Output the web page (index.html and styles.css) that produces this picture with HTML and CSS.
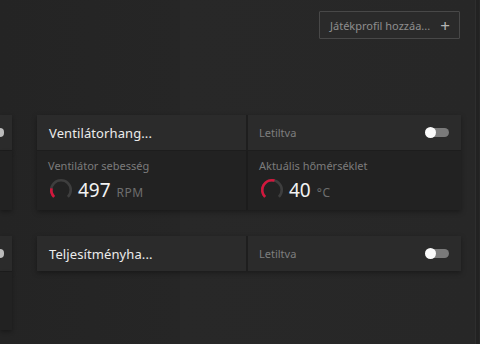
FILE: index.html
```html
<!DOCTYPE html>
<html lang="hu">
<head>
    <meta charset="UTF-8">
    <meta name="viewport" content="width=device-width, initial-scale=1.0">
    <title>Játékprofilok</title>
    <link rel="stylesheet" href="styles.css">
</head>
<body>
    <div class="page">
        <div class="toolbar">
            <button class="add-button">
                <span class="add-text">Játékprofil hozzáa...</span>
                <span class="add-plus">+</span>
            </button>
        </div>

        <div class="card-row">
            <div class="stub">
                <div class="stub-head"><span class="stub-knob"></span></div>
                <div class="stub-body"></div>
            </div>
            <div class="card">
                <div class="card-head">
                    <div class="head-title">Ventilátorhang...</div>
                    <div class="head-status">
                        <span class="status-text">Letiltva</span>
                        <span class="toggle"><span class="toggle-knob"></span></span>
                    </div>
                </div>
                <div class="card-body">
                    <div class="metric">
                        <div class="metric-label">Ventilátor sebesség</div>
                        <div class="metric-value">
                            <svg class="gauge" viewBox="0 0 24 24">
                                <path d="M5.64 18.36 A9 9 0 1 1 18.36 18.36" fill="none" stroke="#3e3e3e" stroke-width="2.4"/>
                                <path d="M5.64 18.36 A9 9 0 0 1 3.2 10.5" fill="none" stroke="#d4163c" stroke-width="2.4"/>
                            </svg>
                            <span class="value-num">497</span>
                            <span class="value-unit">RPM</span>
                        </div>
                    </div>
                    <div class="metric">
                        <div class="metric-label">Aktuális hőmérséklet</div>
                        <div class="metric-value">
                            <svg class="gauge" viewBox="0 0 24 24">
                                <path d="M5.64 18.36 A9 9 0 1 1 18.36 18.36" fill="none" stroke="#3e3e3e" stroke-width="2.4"/>
                                <path d="M5.64 18.36 A9 9 0 0 1 14.3 3.3" fill="none" stroke="#d4163c" stroke-width="2.4"/>
                            </svg>
                            <span class="value-num">40</span>
                            <span class="value-unit">°C</span>
                        </div>
                    </div>
                </div>
            </div>
        </div>

        <div class="card-row">
            <div class="stub">
                <div class="stub-head"><span class="stub-knob"></span></div>
                <div class="stub-body tall"></div>
            </div>
            <div class="card">
                <div class="card-head">
                    <div class="head-title">Teljesítményha...</div>
                    <div class="head-status">
                        <span class="status-text">Letiltva</span>
                        <span class="toggle"><span class="toggle-knob"></span></span>
                    </div>
                </div>
            </div>
        </div>
    </div>
    <div class="scrollbar"></div>
</body>
</html>
```

FILE: styles.css
```css
html, body {
    margin: 0;
    height: 100%;
}
body {
    font-family: "Noto Sans", "Open Sans", sans-serif;
    background-color: #272727;
    color: #e6e6e6;
    display: flex;
    overflow: hidden;
}
.page {
    flex: 1;
    background: linear-gradient(90deg, #242424 0, #262626 180px, #282828 180px, #272727 100%);
}
.scrollbar {
    width: 3px;
    margin-right: 1px;
    background-color: #222;
    border-left: 1px solid #2e2e2e;
}
.toolbar {
    display: flex;
    justify-content: flex-end;
    padding: 11px 15px 0 0;
    height: 104px;
}
.add-button {
    width: 141px;
    height: 28px;
    display: flex;
    align-items: center;
    justify-content: space-between;
    padding: 0 9px 0 10px;
    background-color: #2a2a2a;
    border: 1px solid #484848;
    border-radius: 1px;
    font-family: inherit;
    cursor: pointer;
}
.add-text {
    font-size: 11px;
    color: #8e8e8e;
}
.add-plus {
    font-size: 17px;
    line-height: 1;
    color: #b4b4b4;
}
.card-row {
    display: flex;
    gap: 25px;
    margin-bottom: 26px;
    align-items: flex-start;
}
.stub {
    width: 12px;
}
.stub-head {
    height: 35px;
    background-color: #2b2b2b;
    border-bottom: 1px solid #1d1d1d;
    display: flex;
    align-items: center;
    box-shadow: 0 2px 4px rgba(0,0,0,0.3);
}
.stub-knob {
    width: 4px;
    height: 9px;
    background-color: #bcbcbc;
    border-radius: 0 5px 5px 0;
}
.stub-body {
    height: 59px;
    background-color: #222;
    box-shadow: 0 2px 4px rgba(0,0,0,0.3);
}
.stub-body.tall {
    height: 58px;
}
.card {
    width: 424px;
    box-shadow: 0 2px 5px rgba(0,0,0,0.35);
}
.card-head {
    display: flex;
    height: 35px;
    background-color: #2b2b2b;
    border-bottom: 1px solid #1d1d1d;
}
.card-head:last-child {
    border-bottom: none;
}
.head-title {
    width: 211px;
    padding-left: 12px;
    box-sizing: border-box;
    display: flex;
    align-items: center;
    font-size: 13px;
    letter-spacing: 0.1px;
    color: #ececec;
    border-right: 2px solid #1e1e1e;
}
.head-status {
    flex: 1;
    display: flex;
    align-items: center;
    justify-content: space-between;
    padding: 0 12px 0 11px;
}
.status-text {
    font-size: 11px;
    color: #7e7e7e;
}
.toggle {
    width: 23px;
    height: 9px;
    background-color: #7a7a7a;
    border-radius: 5px;
    display: flex;
    align-items: center;
}
.toggle-knob {
    width: 11px;
    height: 11px;
    border-radius: 50%;
    background-color: #fafafa;
    margin-left: -1px;
}
.card-body {
    display: flex;
    height: 59px;
    background-color: #222;
}
.metric {
    width: 211px;
    padding: 7px 12px 0 11px;
    box-sizing: border-box;
}
.metric:first-child {
    border-right: 2px solid #1c1c1c;
}
.metric-label {
    font-size: 11px;
    color: #7c7c7c;
    margin-bottom: 4px;
}
.metric-value {
    display: flex;
    align-items: baseline;
}
.gauge {
    width: 26px;
    height: 26px;
    align-self: center;
    margin-right: 4px;
}
.value-num {
    font-size: 19px;
    color: #f2f2f2;
    margin-right: 6px;
}
.value-unit {
    font-size: 12px;
    letter-spacing: 0.5px;
    color: #6e6e6e;
}
```
